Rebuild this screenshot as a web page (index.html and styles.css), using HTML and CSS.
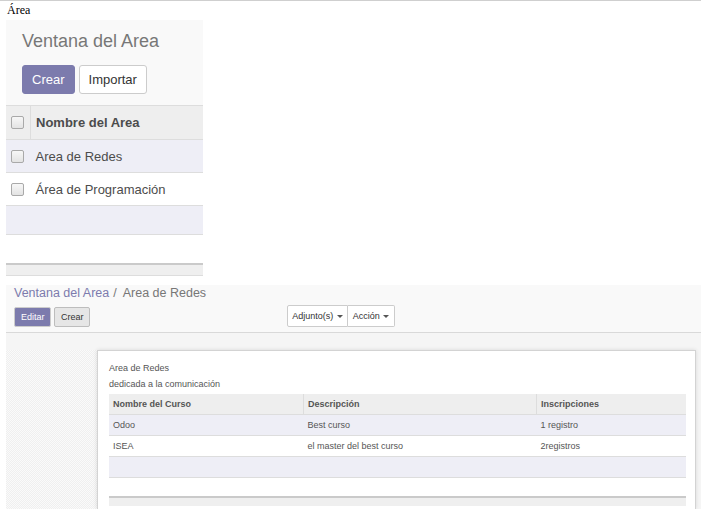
FILE: index.html
```html
<!DOCTYPE html>
<html lang="es">
<head>
<meta charset="utf-8">
<title>Área</title>
<link rel="stylesheet" href="styles.css">
</head>
<body>
<div class="topline"></div>
<div class="doc">
  <p class="caption">Área</p>

  <div class="shot1">
    <div class="cp1">
      <h1 class="title1">Ventana del Area</h1>
      <div class="btns1">
        <button class="btn1 btn-primary">Crear</button>
        <button class="btn1 btn-default">Importar</button>
      </div>
    </div>
    <table class="list1">
      <thead>
        <tr><th class="cb"><span class="check"></span></th><th>Nombre del Area</th></tr>
      </thead>
      <tbody>
        <tr class="odd"><td class="cb"><span class="check"></span></td><td>Area de Redes</td></tr>
        <tr><td class="cb"><span class="check"></span></td><td>Área de Programación</td></tr>
        <tr class="odd empty"><td class="cb"></td><td></td></tr>
      </tbody>
    </table>
    <div class="gap1"></div>
    <div class="foot1"></div>
  </div>

  <div class="shot2">
    <div class="cp2">
      <div class="crumbs"><span class="crumb-link">Ventana del Area</span><span class="crumb-sep">/</span><span class="crumb-cur">Area de Redes</span></div>
      <div class="cp2-row">
        <div class="btns2">
          <button class="btn2 btn-primary">Editar</button>
          <button class="btn2 btn-gray">Crear</button>
        </div>
        <div class="group2">
          <button class="btn2 btn-white">Adjunto(s) <span class="caret"></span></button>
          <button class="btn2 btn-white">Acción <span class="caret"></span></button>
        </div>
      </div>
    </div>
    <div class="content2">
      <div class="texture"></div>
      <div class="sheet">
        <div class="field">Area de Redes</div>
        <div class="field">dedicada a la comunicación</div>
        <table class="list2">
          <thead>
            <tr><th class="c1">Nombre del Curso</th><th class="c2">Descripción</th><th class="c3">Inscripciones</th></tr>
          </thead>
          <tbody>
            <tr class="odd"><td>Odoo</td><td>Best curso</td><td>1 registro</td></tr>
            <tr><td>ISEA</td><td>el master del best curso</td><td>2registros</td></tr>
            <tr class="odd empty"><td></td><td></td><td></td></tr>
          </tbody>
        </table>
        <div class="gap2"></div>
        <div class="foot2"></div>
      </div>
    </div>
  </div>
</div>
</body>
</html>
```

FILE: styles.css
```css
html, body { margin: 0; padding: 0; background: #fff; }
body { overflow: hidden; height: 510px; }
.topline { height: 1px; background: #cfcfcf; }
.doc { padding-left: 6px; }
.caption {
  margin: 0;
  font-family: "Liberation Serif", serif;
  font-size: 12px;
  line-height: 16px;
  padding: 1px 0 2px 1px;
  color: #000;
}

/* ---------- first screenshot ---------- */
.shot1 { width: 197px; font-family: "Liberation Sans", Arial, sans-serif; }
.cp1 { background: #f9f9f9; padding: 11px 0 10px 16px; height: 64px; }
.title1 { margin: 0; font-weight: normal; font-size: 18px; line-height: 21px; color: #777; }
.btns1 { display: flex; gap: 4px; margin-top: 13px; }
.btn1 {
  font-family: "Liberation Sans", Arial, sans-serif;
  font-size: 13px; line-height: 17px;
  padding: 5px 9px; border-radius: 3px; border: 1px solid #ccc; cursor: pointer;
}
.btn-primary { background: #7c7bad; border-color: #7c7bad; color: #fff; }
.btn-default { background: #fff; color: #333; }
.list1 { border-collapse: collapse; width: 100%; font-size: 13px; color: #4c4c4c; }
.list1 th, .list1 td { text-align: left; padding: 0 5px; }
.list1 thead th {
  background: #eee; height: 33px; font-weight: bold;
  border-top: 1px solid #ddd; border-bottom: 1px solid #ddd;
}
.list1 th.cb { border-right: 1px solid #ddd; }
.list1 .cb { width: 14px; padding: 0 5px 0 5px; }
.list1 tbody td { height: 32px; border-bottom: 1px solid #ddd; }
.list1 tr.odd td { background: #eeeef6; }
.list1 tr.empty td { height: 28px; }
.check {
  display: block; width: 11px; height: 11px;
  border: 1px solid #a9a9a9; border-radius: 2px;
  background: linear-gradient(#f7f7f7, #e3e3e3);
}
.gap1 { height: 28px; }
.foot1 { height: 10px; border-top: 2px solid #cacaca; border-bottom: 1px solid #ddd; background: #efefef; }

/* ---------- second screenshot ---------- */
.shot2 { margin-top: 9px; width: 695px; font-family: "Liberation Sans", Arial, sans-serif; }
.cp2 { background: #f9f9f9; padding: 1px 0 5px 8px; border-bottom: 1px solid #d9d9d9; }
.crumbs { font-size: 12.5px; line-height: 15px; }
.crumb-link { color: #7c7bad; }
.crumb-sep { color: #777; margin: 0 6px 0 4px; }
.crumb-cur { color: #777; }
.cp2-row { display: flex; align-items: flex-start; margin-top: 4px; }
.btns2 { display: flex; gap: 3px; width: 273px; padding-top: 2px; }
.btn2 {
  font-family: "Liberation Sans", Arial, sans-serif;
  font-size: 9px; line-height: 11px; white-space: nowrap;
  padding: 4px 6px; border-radius: 2px; border: 1px solid #ccc; cursor: pointer;
  height: 20px;
}
.btns2 .btn-primary { width: 37px; }
.btns2 .btn-gray { width: 36px; background: #e6e6e6; border-color: #bdbdbd; color: #333; }
.group2 { display: flex; }
.btn-white { background: #fff; color: #333; height: 22px; padding: 4px 0; border-radius: 0; text-align: center; }
.group2 .btn-white:first-child { width: 61px; border-radius: 2px 0 0 2px; }
.group2 .btn-white + .btn-white { width: 47px; border-left: none; border-radius: 0 2px 2px 0; }
.caret {
  display: inline-block; width: 0; height: 0; vertical-align: 1px;
  border-left: 3px solid transparent; border-right: 3px solid transparent; border-top: 3px solid #555;
  margin-left: 1px;
}
.content2 {
  display: flex; height: 176px; overflow: hidden;
  background: #f5f5f5;
}
.texture {
  width: 91px; margin-top: 17px;
  background: repeating-conic-gradient(#efefef 0 25%, #fafafa 0 50%) 0 0 / 2px 2px;
}
.sheet {
  width: 576px; margin-top: 17px;
  background: #fff; border: 1px solid #d3d3d3; border-bottom: none;
  box-shadow: 0 0 4px rgba(0,0,0,0.12);
  padding: 9px 10px 0 11px;
  font-size: 9px; color: #555;
}
.field { line-height: 16px; }
.list2 { border-collapse: collapse; width: 577px; margin-top: 2px; }
.list2 th, .list2 td { text-align: left; padding: 0 4px; height: 20px; }
.list2 thead th { background: #eee; font-weight: bold; height: 20px; border-right: 1px solid #ddd; }
.list2 thead th:last-child { border-right: none; }
.list2 .c1 { width: 186px; }
.list2 .c2 { width: 224px; }
.list2 tbody td { border-top: 1px solid #ddd; }
.list2 tbody tr:last-child td { border-bottom: 1px solid #ddd; }
.list2 tr.odd td { background: #eeeef6; }
.gap2 { height: 18px; }
.foot2 { height: 8px; border-top: 2px solid #cacaca; background: #efefef; width: 577px; }
```
